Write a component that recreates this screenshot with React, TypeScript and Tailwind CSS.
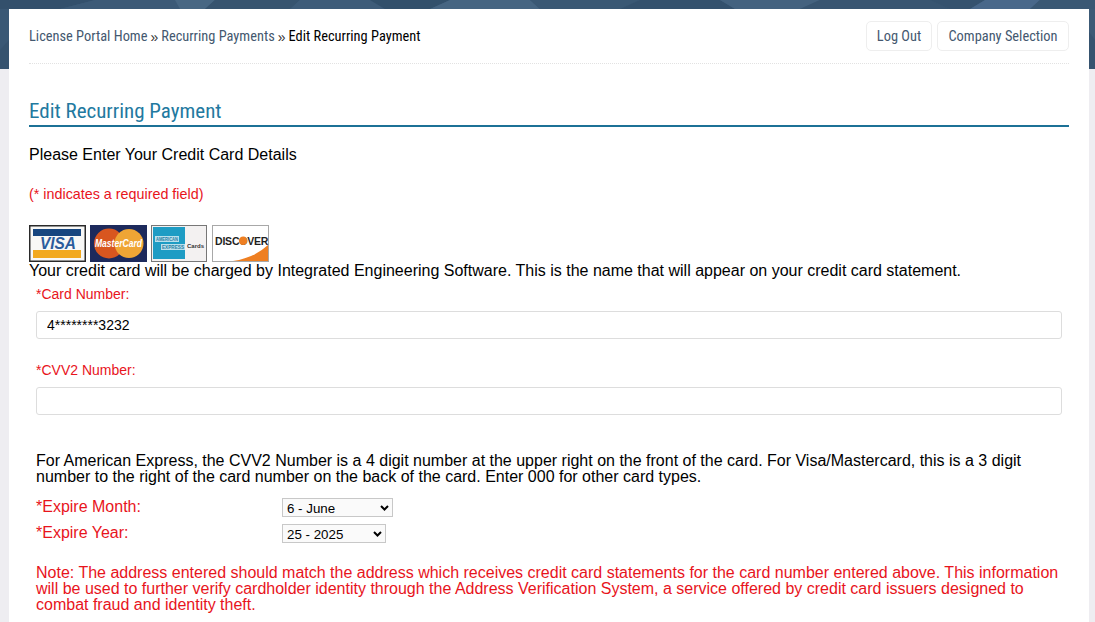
import React from "react";

const shards: [string, string][] = [
  ["0,0 95,0 60,9 0,9", "#33506c"],
  ["0,9 9,9 9,40 0,50", "#3a5875"],
  ["0,50 9,40 9,69 0,69", "#36536f"],
  ["95,0 175,0 180,9 60,9", "#3c5a77"],
  ["175,0 215,0 205,9 180,9", "#486783"],
  ["215,0 300,0 290,9 205,9", "#37546f"],
  ["300,0 370,0 385,9 290,9", "#3e5c79"],
  ["370,0 450,0 430,9 385,9", "#32506b"],
  ["450,0 530,0 540,9 430,9", "#466582"],
  ["530,0 640,0 620,9 540,9", "#3a5874"],
  ["640,0 720,0 735,9 620,9", "#34516d"],
  ["720,0 820,0 800,9 735,9", "#44627f"],
  ["820,0 930,0 950,9 800,9", "#385571"],
  ["930,0 985,0 970,9 950,9", "#35526e"],
  ["985,0 1040,0 1030,9 970,9", "#49688a"],
  ["1040,0 1095,0 1095,9 1030,9", "#3a5874"],
  ["1089,9 1095,9 1095,40 1089,32", "#3c5a76"],
  ["1089,32 1095,40 1095,69 1089,69", "#36536f"],
];

const Band = () => (
  <svg className="absolute left-0 top-0 h-[69px] w-full" viewBox="0 0 1095 69" preserveAspectRatio="none">
    <rect width="1095" height="69" fill="#3c5a77" />
    {shards.map(([points, fill]) => (
      <polygon key={points} points={points} fill={fill} />
    ))}
  </svg>
);

const Cards = () => (
  <svg width="241" height="37" viewBox="0 0 241 37" className="block" style={{ fontFamily: "'Liberation Sans', sans-serif" }}>
    {/* Visa */}
    <rect x="0.75" y="0.75" width="55.5" height="35.5" fill="#f8f8f6" stroke="#2a2a2a" strokeWidth="1.5" />
    <rect x="4" y="4" width="48" height="7" fill="#17467f" />
    <rect x="4" y="25" width="48" height="8" fill="#f2a91e" />
    <text x="11" y="24" fontSize="17" fontWeight="700" fontStyle="italic" fill="#2b5c9c" textLength="36" lengthAdjust="spacingAndGlyphs">
      VISA
    </text>
    {/* Mastercard */}
    <rect x="61" y="0" width="57" height="37" fill="#1d2a5c" />
    <circle cx="80" cy="18.5" r="15" fill="#d8561f" />
    <circle cx="100" cy="18.5" r="14.5" fill="#efa535" />
    <text x="66" y="22" fontSize="11" fontWeight="700" fontStyle="italic" fill="#fff" textLength="47" lengthAdjust="spacingAndGlyphs">
      MasterCard
    </text>
    {/* Amex */}
    <rect x="122.5" y="0.5" width="55" height="36" fill="#f3f1f1" stroke="#777" />
    <rect x="124" y="2" width="32" height="32" fill="#1e9cc4" />
    <rect x="126" y="11" width="24" height="6" fill="#b9e0ec" />
    <rect x="132" y="19" width="24" height="6" fill="#b9e0ec" />
    <text x="127" y="16" fontSize="5" fontWeight="700" fill="#2a7fa5" textLength="22" lengthAdjust="spacingAndGlyphs">
      AMERICAN
    </text>
    <text x="133" y="24" fontSize="5" fontWeight="700" fill="#2a7fa5" textLength="22" lengthAdjust="spacingAndGlyphs">
      EXPRESS
    </text>
    <text x="158" y="23" fontSize="6" fontWeight="700" fill="#333" textLength="17" lengthAdjust="spacingAndGlyphs">
      Cards
    </text>
    {/* Discover */}
    <rect x="183.5" y="0.5" width="56" height="36" fill="#fff" stroke="#a8a8a8" />
    <path d="M239 20 L239 36 L204 36 Q225 33 239 20 Z" fill="#ee7f22" />
    <text x="186" y="19.5" fontSize="10.5" fontWeight="700" letterSpacing="-0.2" fill="#1f1f1f">
      DISCOVER
    </text>
    <circle cx="214.2" cy="15.7" r="4.3" fill="#ee7f22" />
  </svg>
);

const crumbFont = "font-['Roboto',sans-serif] text-[14.4px] [font-stretch:75%]";

const Chevron = () => (
  <svg className="pointer-events-none absolute right-[4px] top-[7px]" width="9" height="6" viewBox="0 0 9 6" fill="none">
    <path d="M1 1 L4.5 4.5 L8 1" stroke="#000" strokeWidth="2" />
  </svg>
);

const selectClass =
  "block h-full w-full appearance-none border border-[#c8c8c8] bg-[#fafafa] pl-[4px] font-['Liberation_Sans',sans-serif] text-[13.33px] text-black outline-none";

export default function App() {
  return (
    <div className="relative h-[622px] overflow-hidden bg-[#eeedf1] font-['Liberation_Sans',sans-serif]">
      <Band />
      <main className="relative mx-[9px] mt-[9px] inline-block w-[1080px] bg-white px-5 pb-[40px] align-top">
        <header className="flex h-[55px] items-start justify-between border-b border-dotted border-[#e2e2e2] pt-3">
          <nav className={`flex h-[30px] items-center pt-[2px] text-[#1d1d1d] ${crumbFont}`}>
            <a className="text-[#44586f]">License Portal Home</a>
            <span className="mx-[3px] font-['Liberation_Sans',sans-serif] text-[14px] text-[#333]">»</span>
            <a className="text-[#44586f]">Recurring Payments</a>
            <span className="mx-[3px] font-['Liberation_Sans',sans-serif] text-[14px] text-[#333]">»</span>
            <span className="text-black">Edit Recurring Payment</span>
          </nav>
          <div className={`flex gap-[5px] text-[#44586f] ${crumbFont}`}>
            <button className="h-[30px] w-[66px] rounded-[5px] border border-[#eeeeee] bg-white pt-[2px]">Log Out</button>
            <button className="h-[30px] w-[132px] rounded-[5px] border border-[#eeeeee] bg-white pt-[2px]">Company Selection</button>
          </div>
        </header>

        <h1 className="mt-[33px] h-[30px] border-b-2 border-[#1c7196] font-['Roboto',sans-serif] text-[21px] leading-[28px] text-[#22799f] [font-stretch:75%]">
          Edit Recurring Payment
        </h1>

        <p className="mt-[19px] text-[16px] leading-[18px] text-black">Please Enter Your Credit Card Details</p>
        <p className="mt-[21px] text-[14.33px] leading-[18px] text-[#e8141c]">(* indicates a required field)</p>

        <div className="mt-[22px]">
          <Cards />
        </div>
        <p className="text-[16px] leading-[18px] text-black">
          Your credit card will be charged by Integrated Engineering Software. This is the name that will appear on your credit card statement.
        </p>

        <section className="px-[7px]">
          <label className="mt-[5px] block text-[14px] leading-[18px] text-[#e8141c]">*Card Number:</label>
          <input
            readOnly
            value="4********3232"
            className="mt-[8px] block h-[28px] w-full rounded-[3px] border border-[#dddddd] bg-white px-[10px] text-[14px] text-black outline-none"
          />
          <label className="mt-[22px] block text-[14px] leading-[18px] text-[#e8141c]">*CVV2 Number:</label>
          <input
            readOnly
            value=""
            className="mt-[8px] block h-[28px] w-full rounded-[3px] border border-[#dddddd] bg-white px-[10px] text-[14px] text-black outline-none"
          />
          <p className="mt-[38px] text-[16px] leading-[16px] text-black">
            For American Express, the CVV2 Number is a 4 digit number at the upper right on the front of the card. For Visa/Mastercard, this is a 3 digit number to the right of the card number on the back of the card. Enter 000 for other card types.
          </p>

          <div className="mt-[12px] flex h-[20px] items-center">
            <span className="w-[246px] text-[16px] text-[#e8141c]">*Expire Month:</span>
            <div className="relative h-[19px] w-[111px]">
              <select defaultValue="6" className={selectClass}>
                <option value="6">6 - June</option>
              </select>
              <Chevron />
            </div>
          </div>
          <div className="mt-[6px] flex h-[20px] items-center">
            <span className="w-[246px] text-[16px] text-[#e8141c]">*Expire Year:</span>
            <div className="relative h-[19px] w-[104px]">
              <select defaultValue="25" className={selectClass}>
                <option value="25">25 - 2025</option>
              </select>
              <Chevron />
            </div>
          </div>

          <p className="mt-[22px] text-[16px] leading-[16px] text-[#e8141c]">
            Note: The address entered should match the address which receives credit card statements for the card number entered above. This information will be used to further verify cardholder identity through the Address Verification System, a service offered by credit card issuers designed to combat fraud and identity theft.
          </p>
        </section>
      </main>
    </div>
  );
}
